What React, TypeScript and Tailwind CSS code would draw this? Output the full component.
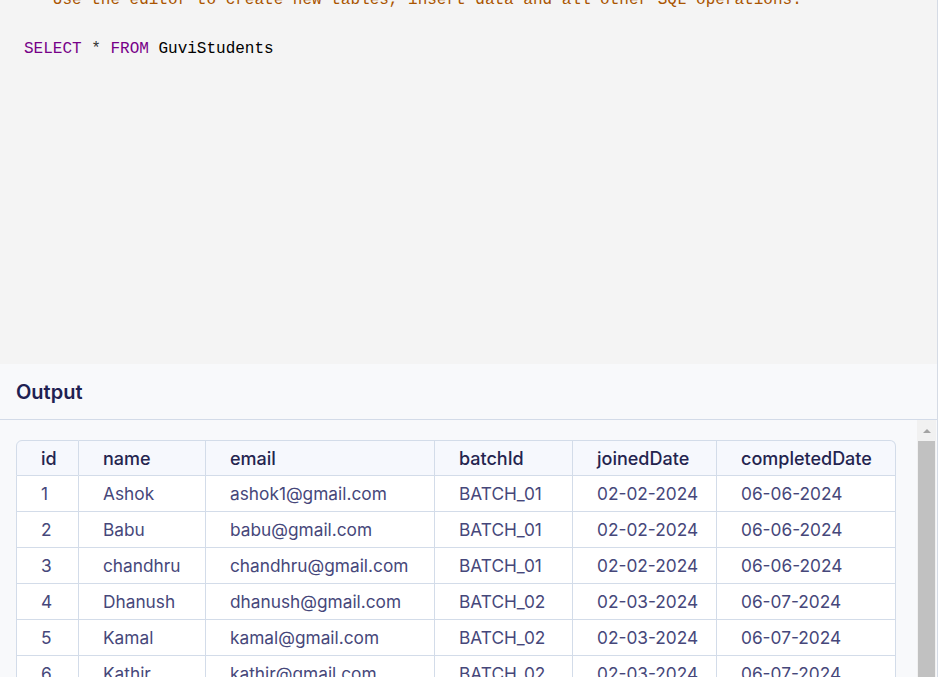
import React from 'react'

type Student = {
  id: number
  name: string
  email: string
  batchId: string
  joinedDate: string
  completedDate: string
}

const students: Student[] = [
  { id: 1, name: 'Ashok', email: 'ashok1@gmail.com', batchId: 'BATCH_01', joinedDate: '02-02-2024', completedDate: '06-06-2024' },
  { id: 2, name: 'Babu', email: 'babu@gmail.com', batchId: 'BATCH_01', joinedDate: '02-02-2024', completedDate: '06-06-2024' },
  { id: 3, name: 'chandhru', email: 'chandhru@gmail.com', batchId: 'BATCH_01', joinedDate: '02-02-2024', completedDate: '06-06-2024' },
  { id: 4, name: 'Dhanush', email: 'dhanush@gmail.com', batchId: 'BATCH_02', joinedDate: '02-03-2024', completedDate: '06-07-2024' },
  { id: 5, name: 'Kamal', email: 'kamal@gmail.com', batchId: 'BATCH_02', joinedDate: '02-03-2024', completedDate: '06-07-2024' },
  { id: 6, name: 'Kathir', email: 'kathir@gmail.com', batchId: 'BATCH_02', joinedDate: '02-03-2024', completedDate: '06-07-2024' },
  { id: 7, name: 'Mani', email: 'mani@gmail.com', batchId: 'BATCH_03', joinedDate: '02-04-2024', completedDate: '06-08-2024' },
]

const columns: { key: keyof Student; width: string }[] = [
  { key: 'id', width: 'w-[63px]' },
  { key: 'name', width: 'w-[127px]' },
  { key: 'email', width: 'w-[229px]' },
  { key: 'batchId', width: 'w-[138px]' },
  { key: 'joinedDate', width: 'w-[144px]' },
  { key: 'completedDate', width: 'w-[179px]' },
]

const Editor = () => (
  <div className="h-[364px] shrink-0 overflow-hidden bg-[#f4f4f4] pl-6 font-['Liberation_Mono',monospace] text-[16px] leading-[24.5px]">
    <div className="-mt-[36.5px]">
      <div className="whitespace-pre text-[#aa5500]">/*</div>
      <div className="whitespace-pre text-[#aa5500]">
        {'   Use the editor to create new tables, insert data and all other SQL operations.'}
      </div>
      <div className="h-[24.5px]" />
      <div className="whitespace-pre">
        <span className="text-[#770088]">SELECT</span>
        <span className="text-[#333]"> * </span>
        <span className="text-[#770088]">FROM</span>
        <span className="text-black"> GuviStudents</span>
      </div>
    </div>
  </div>
)

const Scrollbar = () => (
  <div className="flex w-[19px] shrink-0 flex-col items-center overflow-hidden bg-[#f1f1f1]">
    <div className="flex h-[21px] w-full shrink-0 items-center justify-center">
      <div className="h-0 w-0 border-x-[4px] border-b-[4px] border-x-transparent border-b-[#a3a3a3]" />
    </div>
    <div className="h-[400px] w-[17px] shrink-0 bg-[#c1c1c1]" />
  </div>
)

export default function App() {
  return (
    <div className="flex h-[677px] w-[938px] flex-col overflow-hidden border-r border-[#d5dbe5] bg-white font-['Inter',sans-serif]">
      <Editor />
      <div className="flex h-[56px] shrink-0 items-center border-b border-[#d3dbe8] bg-[#f8f9fb] px-4">
        <span className="text-[20px] font-semibold text-[#1f2152]">Output</span>
      </div>
      <div className="flex min-h-0 flex-1 bg-[#f8f9fb]">
        <div className="min-w-0 flex-1 overflow-hidden pl-4 pt-5">
          <table className="w-[880px] table-fixed border-separate border-spacing-0 text-[17.3px]">
            <thead>
              <tr className="bg-[#f6f8fd]">
                {columns.map((col, i) => (
                  <th
                    key={col.key}
                    className={`${col.width} h-[36px] border-t border-r border-b border-[#d3dce9] px-6 text-left text-[18px] font-medium whitespace-nowrap text-[#24244f] ${i === 0 ? 'rounded-tl-[6px] border-l' : ''} ${i === columns.length - 1 ? 'rounded-tr-[6px]' : ''}`}
                  >
                    {col.key}
                  </th>
                ))}
              </tr>
            </thead>
            <tbody>
              {students.map((s) => (
                <tr key={s.id} className="bg-white">
                  {columns.map((col, i) => (
                    <td
                      key={col.key}
                      className={`h-[36px] border-r border-b border-[#d3dce9] px-6 whitespace-nowrap text-[#46477a] ${i === 0 ? 'border-l' : ''}`}
                    >
                      {s[col.key]}
                    </td>
                  ))}
                </tr>
              ))}
            </tbody>
          </table>
        </div>
        <Scrollbar />
        <div className="w-[1px] shrink-0" />
      </div>
    </div>
  )
}
